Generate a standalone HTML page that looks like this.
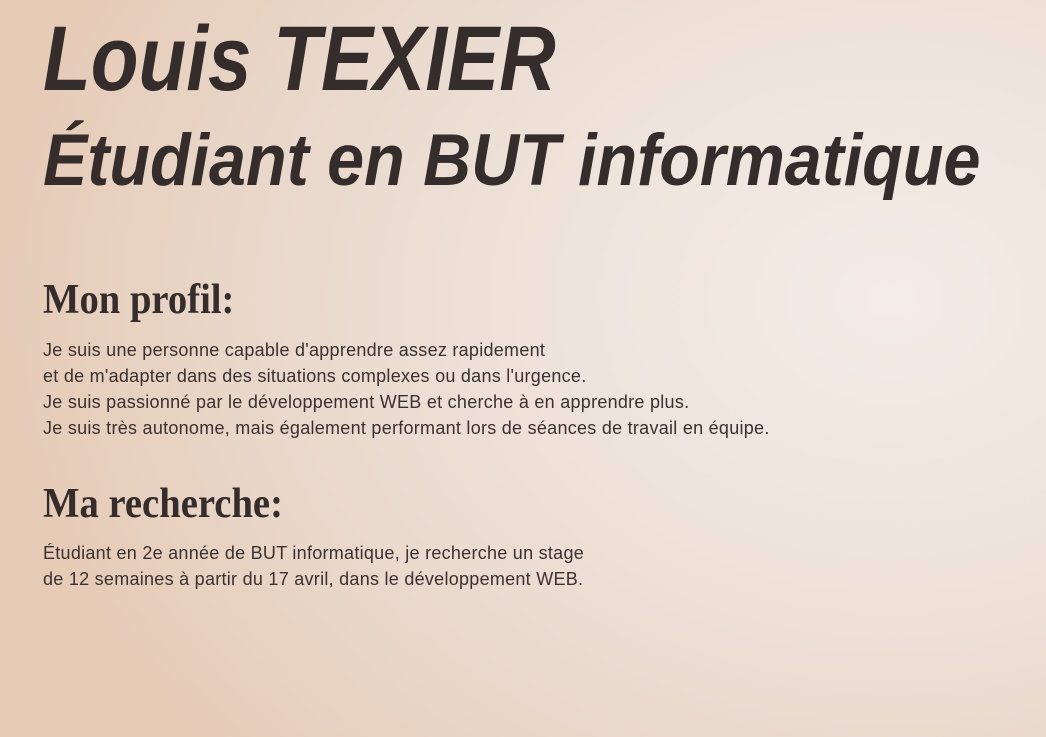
<!DOCTYPE html>
<html><head><meta charset="utf-8"><style>
html,body{margin:0;padding:0}
body{width:1046px;height:737px;overflow:hidden;position:relative;color:#352d2b;
background:radial-gradient(ellipse 900px 700px at 890px 300px,#f4ece7 0%,#efe4dc 35%,#e9d8cb 70%,#e6cbb6 100%);}
.a{position:absolute;left:43px;white-space:nowrap;transform-origin:0 0;}
.t{font-family:"Liberation Sans",sans-serif;font-weight:bold;font-style:italic;line-height:1}
.h{font-family:"Liberation Serif",serif;font-weight:bold;line-height:1}
.p{font-family:"Liberation Sans",sans-serif;font-size:18px;letter-spacing:0.27px;line-height:26px;color:#3a3130}
</style></head><body>
<div class="a t" style="top:13px;font-size:92px;transform:scaleX(0.85)">Louis TEXIER</div>
<div class="a t" style="top:124px;font-size:73px;transform:scaleX(0.91)">Étudiant en BUT informatique</div>
<div class="a h" style="top:279px;font-size:42px;transform:scaleX(0.92)">Mon profil:</div>
<div class="a p" style="top:337px">Je suis une personne capable d'apprendre assez rapidement<br>et de m'adapter dans des situations complexes ou dans l'urgence.<br>Je suis passionné par le développement WEB et cherche à en apprendre plus.<br>Je suis très autonome, mais également performant lors de séances de travail en équipe.</div>
<div class="a h" style="top:483px;font-size:42px;transform:scaleX(0.92)">Ma recherche:</div>
<div class="a p" style="top:540px">Étudiant en 2e année de BUT informatique, je recherche un stage<br>de 12 semaines à partir du 17 avril, dans le développement WEB.</div>
</body></html>
